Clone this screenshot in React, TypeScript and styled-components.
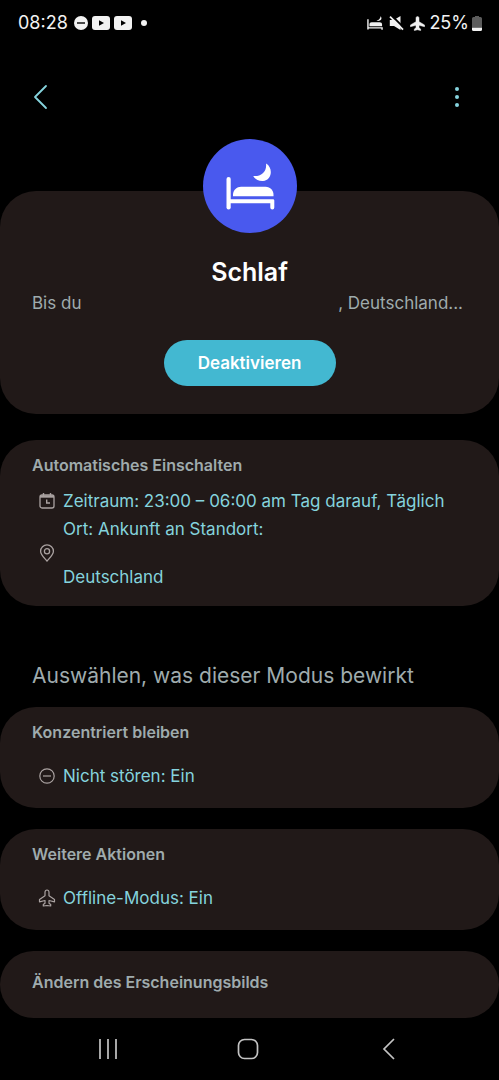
import React from "react";
import styled, { createGlobalStyle } from "styled-components";

const colors = {
  page: "#000000",
  card: "#211918",
  heading: "#9fabad",
  accent: "#85d3dd",
  button: "#43b8d1",
  badge: "#4959ee",
  icon: "#aaa2a1",
  status: "#f2f2f2",
  nav: "#c4c4c4",
};

const GlobalStyle = createGlobalStyle`
  *, *::before, *::after { box-sizing: border-box; }
  body {
    margin: 0;
    background: ${colors.page};
    font-family: Inter, Roboto, sans-serif;
    color: ${colors.heading};
  }
`;

const Screen = styled.div`
  display: flex;
  flex-direction: column;
  min-height: 100vh;
`;

const StatusBar = styled.div`
  display: flex;
  align-items: center;
  justify-content: space-between;
  height: 46px;
  padding: 0 17px 0 18px;
  color: ${colors.status};
  font-size: 18px;
  line-height: 24px;
`;

const StatusGroup = styled.div<{ $gap: number }>`
  display: flex;
  align-items: center;
  gap: ${({ $gap }) => $gap}px;
`;

const Toolbar = styled.header`
  display: flex;
  align-items: center;
  justify-content: space-between;
  height: 102px;
  padding: 0 30px;
`;

const IconButton = styled.button`
  display: flex;
  padding: 0;
  border: 0;
  background: none;
  color: ${colors.accent};
  cursor: pointer;
`;

const Main = styled.main`
  flex: 1;
  display: flex;
  flex-direction: column;
`;

const Card = styled.section<{ $space: number; $padding: string }>`
  margin-top: ${({ $space }) => $space}px;
  padding: ${({ $padding }) => $padding};
  border-radius: 36px;
  background: ${colors.card};
`;

const Hero = styled(Card)`
  display: flex;
  flex-direction: column;
  align-items: center;
`;

const Badge = styled.div`
  display: flex;
  margin-top: -52px;
  border-radius: 50%;
  background: ${colors.badge};
`;

const Title = styled.h1`
  margin: 23px 0 0;
  color: #ffffff;
  font-size: 25px;
  font-weight: 600;
  line-height: 32px;
`;

const Summary = styled.p`
  display: flex;
  justify-content: space-between;
  align-self: stretch;
  margin: 3px 4px 0 0;
  font-size: 17px;
  line-height: 24px;
`;

const PrimaryButton = styled.button`
  width: 172px;
  height: 46px;
  margin-top: 25px;
  padding: 0;
  border: 0;
  border-radius: 23px;
  background: ${colors.button};
  color: #ffffff;
  font: 600 17px/24px Inter, Roboto, sans-serif;
  cursor: pointer;
`;

const CardTitle = styled.h3`
  margin: 0;
  font-size: 16px;
  font-weight: 600;
  line-height: 24px;
`;

const SectionTitle = styled.h2`
  margin: 54px 32px 0;
  font-size: 21px;
  font-weight: 400;
  line-height: 32px;
`;

const Items = styled.ul<{ $space: number }>`
  display: flex;
  flex-direction: column;
  gap: 4px;
  margin: ${({ $space }) => $space}px 0 0;
  padding: 0;
  list-style: none;
`;

const Item = styled.li`
  display: flex;
  align-items: center;
  gap: 7px;
  padding-left: 6px;
  color: ${colors.accent};
  font-size: 17px;
  line-height: 24px;

  svg {
    flex: none;
    color: ${colors.icon};
  }
`;

const Line = styled.span`
  display: block;
  min-height: 24px;
`;

const NavBar = styled.nav`
  display: grid;
  grid-template-columns: repeat(3, 1fr);
  justify-items: center;
  align-items: center;
  height: 62px;
  padding: 0 40px 0 38px;

  button {
    color: ${colors.nav};
  }
`;

const BedBadge = () => (
  <svg width="94" height="94" viewBox="0 0 94 94" fill="#ffffff" aria-hidden="true">
    <rect x="23.500" y="38" width="4.200" height="32.500" rx="2.100" />
    <path d="M25 60.200h45a1.300 1.300 0 0 1 1.300 1.300v7a2 2 0 0 1-4 0v-4.200H25z" />
    <path d="M30 57.300v-1.500c0-5 4-8 8-8h24.500c5 0 8 4 8 8v1.500z" />
    <path d="M63 24.500c7.500 4 6 17-3 17.500c-4.500 .2-8-1.500-9.800-5c7.500 .8 14-4 12.800-12.500z" />
  </svg>
);

const BedSmall = () => (
  <svg width="16" height="16" viewBox="0 0 17 16" fill="currentColor" aria-hidden="true">
    <path d="M1 4v11M1 13.200h15v2" stroke="currentColor" strokeWidth="1.500" fill="none" />
    <path d="M2.600 11.500V9.500C2.600 8 3.500 7.200 5 7.200h8.500c1.400 0 2.500 .8 2.500 2.300v2z" />
    <path d="M14.500 .8c2.200 2.800 0 5.800-4.500 4.800c2.400-.6 4-2.200 4.500-4.800z" />
  </svg>
);

const MuteIcon = () => (
  <svg width="15" height="16" viewBox="0 0 15 16" fill="currentColor" aria-hidden="true">
    <path d="M.8 5h4L11.500 1v14L5 11H.8z" />
    <path d="M2.300 .2l12.700 12.700" stroke="#000000" strokeWidth="2" />
    <path d="M1 1.700l13 13" stroke="currentColor" strokeWidth="1.700" />
  </svg>
);

const PlaneSmall = () => (
  <svg width="15" height="15" viewBox="0 0 18 18" fill="currentColor" aria-hidden="true">
    <path d="M9 .5C7.800 .5 7.200 1.500 7.200 2.700v4.100L.5 10.800v2l6.700-1.600v3l-2 1.500v1.800L9 16.500l3.800 1v-1.800l-2-1.500v-3l6.700 1.600v-2l-6.700-4V2.700C10.800 1.500 10.200 .5 9 .5z" stroke="currentColor" strokeWidth=".6" />
  </svg>
);

const PlaneOutline = () => (
  <svg width="18" height="18" viewBox="0 0 18 18" fill="none" aria-hidden="true">
    <path
      d="M9 1C7.800 1 7 2 7 3.200v3.600L1.500 10.600v2.200l5.500-1.300v2.700l-1.700 1.300v1.500l3.700-.5l3.700 .5v-1.500L11 14.200v-2.700l5.500 1.300v-2.200L11 6.800V3.200C11 2 10.200 1 9 1z"
      stroke="currentColor"
      strokeWidth="1.200"
      strokeLinejoin="round"
    />
  </svg>
);

const DndFilled = () => (
  <svg width="14" height="14" viewBox="0 0 14 14" aria-hidden="true">
    <circle cx="7" cy="7" r="7" fill="currentColor" />
    <path d="M3 7h8" stroke="#000000" strokeWidth="1.400" />
  </svg>
);

const VideoIcon = () => (
  <svg width="18" height="14" viewBox="0 0 18 14" aria-hidden="true">
    <rect width="18" height="14" rx="3" fill="currentColor" />
    <path d="M7 4.300v5.400L12 7z" fill="#000000" />
  </svg>
);

const DotIcon = () => (
  <svg width="6" height="6" viewBox="0 0 6 6" aria-hidden="true">
    <circle cx="3" cy="3" r="3" fill="currentColor" />
  </svg>
);

const BatteryIcon = () => (
  <svg width="10" height="15" viewBox="0 0 10 15" aria-hidden="true">
    <path d="M3 0h4v1h1.500A1.500 1.500 0 0 1 10 2.500V11H0V2.500A1.500 1.500 0 0 1 1.500 1H3z" fill="#5c5c5c" />
    <path d="M0 11.500h10v2a1.500 1.500 0 0 1-1.500 1.500h-7A1.500 1.500 0 0 1 0 13.500z" fill="currentColor" />
  </svg>
);

const BackIcon = () => (
  <svg width="20" height="28" viewBox="0 0 20 28" fill="none" aria-hidden="true">
    <path d="M16 3L5 14l11 11" stroke="currentColor" strokeWidth="1.800" strokeLinecap="round" strokeLinejoin="round" />
  </svg>
);

const MoreIcon = () => (
  <svg width="24" height="24" viewBox="0 0 24 24" fill="currentColor" aria-hidden="true">
    <circle cx="12" cy="4" r="2" />
    <circle cx="12" cy="12" r="2" />
    <circle cx="12" cy="20" r="2" />
  </svg>
);

const CalendarIcon = () => (
  <svg width="18" height="18" viewBox="0 0 18 18" fill="none" stroke="currentColor" aria-hidden="true">
    <rect x="2" y="3" width="14" height="13" rx="2" strokeWidth="1.300" />
    <path d="M2 4.500h14" strokeWidth="2.400" />
    <path d="M5.500 1v3M12.500 1v3" strokeWidth="1.400" />
    <path d="M8.700 7.500V11h3.300" strokeWidth="1.400" />
  </svg>
);

const PinIcon = () => (
  <svg width="18" height="18" viewBox="0 0 18 18" fill="none" stroke="currentColor" strokeWidth="1.300" aria-hidden="true">
    <path d="M9 17C6 13.500 2.600 10.800 2.600 7.200a6.400 6.400 0 0 1 12.800 0C15.400 10.800 12 13.500 9 17z" />
    <circle cx="9" cy="7.200" r="2.600" />
  </svg>
);

const DndOutline = () => (
  <svg width="18" height="18" viewBox="0 0 18 18" fill="none" stroke="currentColor" strokeWidth="1.200" aria-hidden="true">
    <circle cx="9" cy="9" r="7.200" />
    <path d="M5 9h8" />
  </svg>
);

const RecentsIcon = () => (
  <svg width="20" height="22" viewBox="0 0 20 22" fill="none" aria-hidden="true">
    <path d="M2 1v20M10 1v20M18 1v20" stroke="currentColor" strokeWidth="1.700" />
  </svg>
);

const HomeIcon = () => (
  <svg width="22" height="22" viewBox="0 0 22 22" fill="none" aria-hidden="true">
    <rect x="1.500" y="1.500" width="19" height="19" rx="6" stroke="currentColor" strokeWidth="1.700" />
  </svg>
);

const NavBackIcon = () => (
  <svg width="14" height="22" viewBox="0 0 14 22" fill="none" aria-hidden="true">
    <path d="M12 1L2 11l10 10" stroke="currentColor" strokeWidth="1.700" />
  </svg>
);

export default function App() {
  return (
    <Screen>
      <GlobalStyle />
      <StatusBar>
        <StatusGroup $gap={9}>
          <StatusGroup $gap={6}>
            <time>08:28</time>
            <StatusGroup $gap={4}>
              <DndFilled />
              <VideoIcon />
              <VideoIcon />
            </StatusGroup>
          </StatusGroup>
          <DotIcon />
        </StatusGroup>
        <StatusGroup $gap={4}>
          <StatusGroup $gap={6}>
            <BedSmall />
            <MuteIcon />
            <PlaneSmall />
          </StatusGroup>
          <StatusGroup $gap={3}>
            <span>25%</span>
            <BatteryIcon />
          </StatusGroup>
        </StatusGroup>
      </StatusBar>

      <Toolbar>
        <IconButton aria-label="Zurück">
          <BackIcon />
        </IconButton>
        <IconButton aria-label="Weitere Optionen">
          <MoreIcon />
        </IconButton>
      </Toolbar>

      <Main>
        <Hero $space={43} $padding="0 32px 28px">
          <Badge>
            <BedBadge />
          </Badge>
          <Title>Schlaf</Title>
          <Summary>
            <span>Bis du</span>
            <span>, Deutschland...</span>
          </Summary>
          <PrimaryButton>Deaktivieren</PrimaryButton>
        </Hero>

        <Card $space={26} $padding="13px 32px 17px">
          <CardTitle>Automatisches Einschalten</CardTitle>
          <Items $space={12}>
            <Item>
              <CalendarIcon />
              <span>Zeitraum: 23:00 – 06:00 am Tag darauf, Täglich</span>
            </Item>
            <Item>
              <PinIcon />
              <div>
                <Line>Ort: Ankunft an Standort:</Line>
                <Line />
                <Line>Deutschland</Line>
              </div>
            </Item>
          </Items>
        </Card>

        <SectionTitle>Auswählen, was dieser Modus bewirkt</SectionTitle>

        <Card $space={15} $padding="13px 32px 20px">
          <CardTitle>Konzentriert bleiben</CardTitle>
          <Items $space={20}>
            <Item>
              <DndOutline />
              <span>Nicht stören: Ein</span>
            </Item>
          </Items>
        </Card>

        <Card $space={21} $padding="13px 32px 20px">
          <CardTitle>Weitere Aktionen</CardTitle>
          <Items $space={20}>
            <Item>
              <PlaneOutline />
              <span>Offline-Modus: Ein</span>
            </Item>
          </Items>
        </Card>

        <Card $space={21} $padding="19px 32px 24px">
          <CardTitle>Ändern des Erscheinungsbilds</CardTitle>
        </Card>
      </Main>

      <NavBar>
        <IconButton aria-label="Letzte Apps">
          <RecentsIcon />
        </IconButton>
        <IconButton aria-label="Startseite">
          <HomeIcon />
        </IconButton>
        <IconButton aria-label="Zurück">
          <NavBackIcon />
        </IconButton>
      </NavBar>
    </Screen>
  );
}
